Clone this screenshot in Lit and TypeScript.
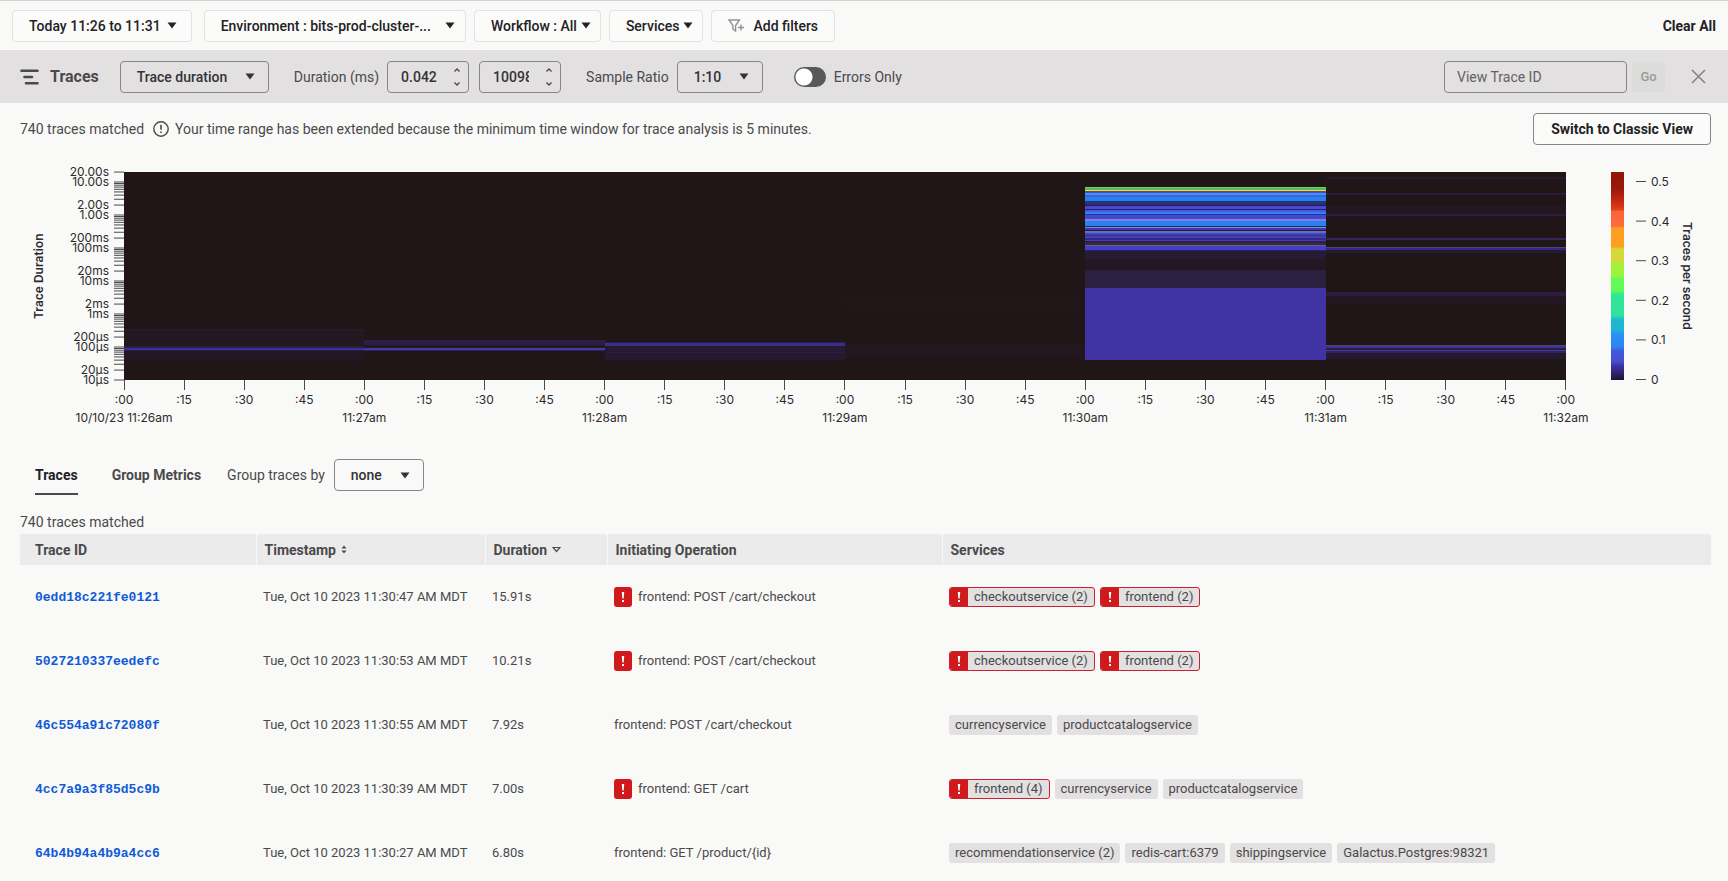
import { LitElement, html, css, svg } from "lit";
import { customElement } from "lit/decorators.js";

interface Chip { name: string; error?: boolean }
interface Trace { id: string; time: string; duration: string; op: string; error: boolean; services: Chip[] }

const TRACES: Trace[] = [
  { id: "0edd18c221fe0121", time: "11:30:47", duration: "15.91s", op: "frontend: POST /cart/checkout", error: true,
    services: [{ name: "checkoutservice (2)", error: true }, { name: "frontend (2)", error: true }] },
  { id: "5027210337eedefc", time: "11:30:53", duration: "10.21s", op: "frontend: POST /cart/checkout", error: true,
    services: [{ name: "checkoutservice (2)", error: true }, { name: "frontend (2)", error: true }] },
  { id: "46c554a91c72080f", time: "11:30:55", duration: "7.92s", op: "frontend: POST /cart/checkout", error: false,
    services: [{ name: "currencyservice" }, { name: "productcatalogservice" }] },
  { id: "4cc7a9a3f85d5c9b", time: "11:30:39", duration: "7.00s", op: "frontend: GET /cart", error: true,
    services: [{ name: "frontend (4)", error: true }, { name: "currencyservice" }, { name: "productcatalogservice" }] },
  { id: "64b4b94a4b9a4cc6", time: "11:30:27", duration: "6.80s", op: "frontend: GET /product/{id}", error: false,
    services: [{ name: "recommendationservice (2)" }, { name: "redis-cart:6379" }, { name: "shippingservice" }, { name: "Galactus.Postgres:98321" }] },
];

// Heat map bands: [minute, top, height, colour]
const BANDS: [number, number, number, string][] = [
  [0, 157, 2, "#251a30"], [0, 159, 15, "#231820"], [0, 174, 2, "#2a1e42"], [0, 176, 2, "#3d2f96"], [0, 178, 1, "#2a1e50"], [0, 180, 8, "#231726"],
  [1, 168, 5, "#2b1e44"], [1, 173, 3, "#241822"], [1, 176, 2, "#453aa8"], [1, 178, 1, "#2d2260"],
  [2, 170, 1, "#2b1e48"], [2, 171, 3, "#3c2d8c"], [2, 174, 6, "#251a32"], [2, 180, 1, "#2a1d48"], [2, 181, 7, "#251930"],
  [3, 125, 10, "#211719"], [3, 172, 14, "#22171f"],
  [4, 15, 1, "#78c87c"], [4, 16, 2, "#42c846"], [4, 18, 1, "#f0d09a"], [4, 19, 1, "#8a4328"], [4, 20, 1, "#3b4fd0"],
  [4, 21, 2, "#4a90f4"], [4, 23, 2, "#3464e0"], [4, 25, 4, "#2b80ec"], [4, 29, 2, "#173a88"], [4, 31, 2, "#3a2a66"], [4, 33, 1, "#211b58"],
  [4, 34, 3, "#4a48d4"], [4, 37, 1, "#1d2470"], [4, 38, 2, "#4858e0"], [4, 40, 2, "#2f84f2"], [4, 42, 1, "#1a3b90"],
  [4, 43, 4, "#4548cc"], [4, 47, 2, "#8878ec"], [4, 49, 5, "#2684ee"], [4, 54, 1, "#1c2c66"], [4, 55, 1, "#8a88c8"],
  [4, 56, 2, "#3c38b4"], [4, 58, 1, "#201a50"], [4, 59, 2, "#706fa8"], [4, 61, 2, "#3448cc"], [4, 63, 1, "#3f2d80"],
  [4, 64, 2, "#4340b8"], [4, 66, 2, "#32288c"], [4, 68, 1, "#453bb0"], [4, 69, 2, "#2c2050"], [4, 71, 2, "#3b2a34"],
  [4, 73, 1, "#6c6080"], [4, 74, 4, "#4240c8"], [4, 78, 1, "#2c2068"], [4, 79, 8, "#251b32"], [4, 87, 11, "#231724"], [4, 98, 18, "#2c2040"],
  [4, 116, 72, "#4034a4"],
  [5, 5, 2, "#261a2c"], [5, 21, 2, "#291d3a"], [5, 34, 8, "#231821"], [5, 42, 2, "#2b1d46"], [5, 66, 2, "#35265a"], [5, 75, 1, "#51466c"],
  [5, 76, 2, "#362684"], [5, 78, 3, "#261a30"], [5, 120, 4, "#2a1d40"], [5, 124, 8, "#231821"], [5, 173, 1, "#4d4678"], [5, 174, 2, "#3c3298"],
  [5, 176, 2, "#2a1e40"], [5, 178, 1, "#443a88"], [5, 179, 2, "#2e2268"], [5, 181, 6, "#251a2c"],
];

const DECADE = 33;
const PLOT_TOP = 8;
const Y_LABELS = ["10µs", "100µs", "1ms", "10ms", "100ms", "1.00s", "10.00s"];
const Y_LABELS_2 = ["20µs", "200µs", "2ms", "20ms", "200ms", "2.00s", "20.00s"];
const yAt = (decades: number) => PLOT_TOP + 208 - decades * DECADE;

const caret = html`<svg class="caret" viewBox="0 0 10 7" width="10" height="7" aria-hidden="true"><path d="M0.5 0.5h9L5 6.5z" fill="currentColor"/></svg>`;
const bang = html`<svg viewBox="0 0 4 12" width="4" height="12" aria-hidden="true"><path d="M0.8 1h2.4L2.700 7.500H1.300z" fill="#fff"/><rect x="1" y="9" width="2" height="2" fill="#fff"/></svg>`;

@customElement("app-root")
export class AppRoot extends LitElement {
  static styles = css`
    :host {
      display: block; height: 100vh; overflow: hidden; box-sizing: border-box;
      border-top: 1px solid #d3d3d3; background: #f9f9f8; color: #4a4a4c;
      font: 14px/20px Roboto, "Liberation Sans", sans-serif;
    }
    * { box-sizing: border-box; }
    button, input, select { font: inherit; color: inherit; margin: 0; }
    button, select { cursor: pointer; }
    svg { display: block; flex: none; }
    .filters { display: flex; align-items: center; gap: 8px; height: 49px; padding: 0 12px; color: #222225; font-weight: 500; }
    .filter { display: flex; align-items: center; gap: 6px; height: 32px; padding: 0 14px 0 16px; border: 1px solid #e1e1e6; border-radius: 4px; background: #fbfbfa; }
    .filter.time { margin-right: 4px; }
    .filter.env { gap: 14px; padding-right: 10px; }
    .filter.tight { padding-right: 9px; gap: 4px; }
    .filter.add { padding-right: 16px; gap: 8px; }
    .clear { margin-left: auto; padding: 0; border: 0; background: none; font-weight: 700; }
    .toolbar { display: flex; align-items: center; height: 53px; padding: 0 16px 0 20px; background: #e2e0e0; }
    .brand { display: flex; align-items: center; gap: 11px; margin: 0 21px 0 0; font-size: 16px; font-weight: 700; }
    .select { display: inline-grid; align-items: center; color: #333336; font-weight: 500; }
    .select select {
      grid-area: 1 / 1; appearance: none; height: 32px; padding: 0 40px 0 16px; border: 1px solid #85858c; border-radius: 4px; background: none;
    }
    .select .caret { grid-area: 1 / 1; justify-self: end; margin-right: 14px; pointer-events: none; }
    .field { display: flex; align-items: center; gap: 8px; margin-left: 25px; }
    .number { display: flex; align-items: center; width: 82px; height: 32px; padding: 0 7px 0 13px; border: 1px solid #85858c; border-radius: 4px; color: #333336; }
    .number + .number { margin-left: 2px; }
    .number input { flex: 1; min-width: 0; margin-right: 16px; padding: 0; border: 0; outline: 0; background: none; appearance: textfield; font-weight: 500; }
    .number input::-webkit-inner-spin-button { display: none; }
    .switch { display: flex; align-items: center; gap: 8px; margin-left: 31px; }
    .switch input { appearance: none; width: 32px; height: 20px; border-radius: 10px; background: radial-gradient(circle at 10px 10px, #fff 8px, #59595b 9px); }
    .lookup { display: flex; align-items: center; gap: 5px; margin-left: auto; }
    .lookup input { width: 183px; height: 32px; padding: 0 12px; border: 1px solid #85858c; border-radius: 4px; background: none; }
    .lookup input::placeholder { color: #626265; opacity: 1; }
    .lookup .go { height: 30px; width: 33px; padding: 0; border: 0; border-radius: 3px; background: #dcdcdb; color: #9a9a9c; font-size: 13px; font-weight: 500; }
    .lookup .close { margin-left: 15px; padding: 6px; border: 0; background: none; color: #808084; }
    .summary { display: flex; align-items: center; height: 52px; padding: 0 17px 0 20px; gap: 9px; }
    .summary .note { display: flex; align-items: center; gap: 6px; }
    .classic { margin-left: auto; height: 32px; padding: 0 17px; border: 1px solid #85858c; border-radius: 4px; background: #fbfbfa; color: #222225; font-weight: 700; }
    .chart { display: grid; grid-template-columns: 20px 73px minmax(0, 1fr) 162px; padding: 9px 0 0 31px; font: 12px/16px Inter, sans-serif; color: #2b2b2d; }
    .chart .axis-title { writing-mode: vertical-rl; text-align: center; font-weight: 600; font-size: 12px; }
    .chart .left { transform: rotate(180deg); height: 216px; padding-bottom: 8px; justify-self: start; }
    .chart text { font: 12px Inter, sans-serif; fill: #2b2b2d; }
    .plot { padding-top: 8px; }
    .plot .heat { width: 100%; height: 208px; background: #201618; }
    .times { display: flex; justify-content: space-between; height: 56px; }
    .time-tick { display: flex; flex-direction: column; align-items: center; width: 0; white-space: nowrap; }
    .time-tick::before { content: ""; flex: none; width: 1px; height: 10px; background: #4a4a4c; }
    .time-tick span { margin-top: 2px; line-height: 16px; }
    .legend { display: flex; padding: 8px 0 0 45px; }
    .ramp {
      width: 13px; height: 208px;
      background: linear-gradient(#8e160a 0, #9b180a 8%, #c62810 14%, #e04020 18%, #f96639 19%, #fb6c3c 26%, #fda022 27%, #fda022 36%,
        #d6d83a 37%, #d4da38 43%, #a4f03c 44%, #9cf43c 50%, #64fb54 51%, #60fa58 57%, #30e698 59%, #2ee29c 69%,
        #1eb8d2 71%, #1fb4d6 76%, #2a90f6 78%, #2c84f0 84%, #4258dc 86%, #4450d0 91%, #3c34a8 93%, #30206a 97%, #221428 100%);
    }
    .legend .axis-title { height: 208px; margin-left: 5px; }
    .tabs { display: flex; align-items: center; padding: 19px 35px 0; }
    .tabs .tab { height: 40px; padding: 1px 0 0; margin-right: 34px; border: 0; border-bottom: 2px solid transparent; background: none; font-weight: 700; }
    .tabs .tab.group { margin-right: 26px; }
    .tabs .tab.active { border-color: #4a4a4c; color: #222225; }
    .tabs .group-by { display: flex; align-items: center; gap: 9px; }
    .list { padding: 17px 17px 0 20px; }
    .list p { margin: 0 0 2px; }
    table { width: 100%; border-collapse: collapse; table-layout: fixed; }
    th { height: 31px; padding: 0 0 0 8px; text-align: left; font-weight: 700; background: #ebebeb; border-right: 1px solid #f9f9f8; }
    th:last-child { border-right: 0; }
    td { height: 64px; padding: 0 0 0 7px; white-space: nowrap; font-size: 13px; }
    th:first-child, td:first-child { padding-left: 15px; }
    .c-id { width: 236px; } .c-time { width: 229px; } .c-dur { width: 122px; } .c-op { width: 335px; }
    .sort { display: inline-flex; align-items: center; gap: 5px; padding: 0; border: 0; background: none; font-weight: 700; }
    .id { color: #0f5bd6; text-decoration: none; font: 700 13px/20px "Liberation Mono", monospace; }
    .op, .chips { display: flex; align-items: center; gap: 6px; }
    .chips { gap: 5px; }
    .flag { display: flex; align-items: center; justify-content: center; width: 18px; height: 20px; border-radius: 3px; background: #d0191b; }
    .chip { display: flex; align-items: center; height: 20px; padding: 0 6px; border-radius: 3px; background: #e2e0e0; }
    .chip.error { padding: 0 6px 0 0; gap: 6px; border: 1px solid #cc2030; overflow: hidden; }
    .chip.error .flag { border-radius: 0; }
  `;

  private select(options: string[], id: string, label?: string) {
    return html`<span class="select"><select id=${id} aria-label=${label ?? id}>${options.map((o) => html`<option>${o}</option>`)}</select>${caret}</span>`;
  }

  private number(value: string, label: string) {
    return html`<span class="number"><input type="number" step="any" .value=${value} aria-label=${label} />
      <svg width="8" height="20" viewBox="0 0 8 20" fill="none" stroke="#4a4a4c" stroke-width="1.3"><path d="M1.500 4.500 4 2l2.500 2.500M1.500 15.500 4 18l2.500-2.500"/></svg></span>`;
  }

  private yAxis() {
    const ticks: number[] = [];
    for (let d = 0; d < 6; d++) for (let m = 1; m < 10; m++) ticks.push(d + Math.log10(m));
    ticks.push(6, 6 + Math.log10(2));
    return html`<svg width="73" height="232" viewBox="0 0 73 232" role="img" aria-label="Trace duration scale">
      ${ticks.map((t) => svg`<line x1="63" x2="73" y1=${yAt(t)} y2=${yAt(t)} stroke="#4a4a4c" stroke-width="1"/>`)}
      ${Y_LABELS.map((l, i) => svg`<text x="58" y=${yAt(i) + 4} text-anchor="end">${l}</text>`)}
      ${Y_LABELS_2.map((l, i) => svg`<text x="58" y=${yAt(i + Math.log10(2)) + 4} text-anchor="end">${l}</text>`)}
    </svg>`;
  }

  private times() {
    return Array.from({ length: 25 }, (_, i) => {
      const minute = i / 4;
      return html`<div class="time-tick"><span>:${String((i % 4) * 15).padStart(2, "0")}</span>
        ${i % 4 === 0 ? html`<span>${i === 0 ? "10/10/23 " : ""}11:${26 + minute}am</span>` : ""}</div>`;
    });
  }

  render() {
    return html`
      <nav class="filters">
        <button class="filter time">Today 11:26 to 11:31 ${caret}</button>
        <button class="filter env">Environment : bits-prod-cluster-... ${caret}</button>
        <button class="filter tight">Workflow : All ${caret}</button>
        <button class="filter tight">Services ${caret}</button>
        <button class="filter add">
          <svg width="17" height="14" viewBox="0 0 17 14" fill="none" stroke="#929296" stroke-width="1.4"><path d="M1 1h10.500L7.600 6.500V12L4.900 10V6.500z"/><path d="M13 5.500v6M10 8.500h6"/></svg>
          Add filters
        </button>
        <button class="clear">Clear All</button>
      </nav>
      <header class="toolbar">
        <h1 class="brand">
          <svg width="19" height="16" viewBox="0 0 19 16" fill="none" stroke="#4a4a4c" stroke-width="2.600" stroke-linecap="round"><path d="M1.500 1.800h16M4.500 8H12M6 14.200h11.500"/></svg>
          Traces
        </h1>
        ${this.select(["Trace duration"], "metric", "Metric")}
        <div class="field"><span>Duration (ms)</span>${this.number("0.042", "Minimum duration")}${this.number("100981", "Maximum duration")}</div>
        <div class="field"><label for="ratio">Sample Ratio</label>${this.select(["1:10"], "ratio", "Sample Ratio")}</div>
        <label class="switch"><input type="checkbox" role="switch" />Errors Only</label>
        <form class="lookup">
          <input type="text" placeholder="View Trace ID" aria-label="View Trace ID" />
          <button class="go" type="button" disabled>Go</button>
          <button class="close" type="button" aria-label="Close"><svg width="15" height="15" viewBox="0 0 15 15" fill="none" stroke="currentColor" stroke-width="1.5"><path d="M1 1l13 13M14 1 1 14"/></svg></button>
        </form>
      </header>
      <main>
        <section class="summary">
          <span>740 traces matched</span>
          <span class="note">
            <svg width="16" height="16" viewBox="0 0 16 16"><circle cx="8" cy="8" r="7.200" fill="none" stroke="#4a4a4c" stroke-width="1.400"/><path d="M7.200 3.800h1.600v5H7.200zM7.200 10.400h1.600V12H7.200z" fill="#4a4a4c"/></svg>
            Your time range has been extended because the minimum time window for trace analysis is 5 minutes.
          </span>
          <button class="classic">Switch to Classic View</button>
        </section>
        <section class="chart">
          <div class="axis-title left">Trace Duration</div>
          ${this.yAxis()}
          <div class="plot">
            <svg class="heat" viewBox="0 0 6 208" preserveAspectRatio="none" shape-rendering="crispEdges">
              ${BANDS.map(([m, y, h, c]) => svg`<rect x=${m} y=${y} width="1" height=${h} fill=${c}/>`)}
            </svg>
            <div class="times">${this.times()}</div>
          </div>
          <div class="legend">
            <div class="ramp"></div>
            <svg width="50" height="216" viewBox="0 0 50 216">
              ${[0, 1, 2, 3, 4, 5].map((n) => svg`<line x1="12" x2="22" y1=${207.5 - n * 39.600} y2=${207.5 - n * 39.600} stroke="#4a4a4c"/><text x="27" y=${212 - n * 39.600}>${n ? `0.${n}` : "0"}</text>`)}
            </svg>
            <div class="axis-title">Traces per second</div>
          </div>
        </section>
        <section class="tabs">
          <button class="tab active">Traces</button>
          <button class="tab group">Group Metrics</button>
          <div class="group-by"><label for="group">Group traces by</label>${this.select(["none"], "group", "Group traces by")}</div>
        </section>
        <section class="list">
          <p>740 traces matched</p>
          <table>
            <colgroup><col class="c-id" /><col class="c-time" /><col class="c-dur" /><col class="c-op" /><col /></colgroup>
            <thead><tr>
              <th>Trace ID</th>
              <th><button class="sort">Timestamp <svg width="6" height="9" viewBox="0 0 6 9" fill="#4a4a4c"><path d="M0.500 3.500 3 0.500l2.500 3zM0.500 5.500 3 8.500l2.500-3z"/></svg></button></th>
              <th><button class="sort">Duration <svg width="9" height="7" viewBox="0 0 9 7" fill="none" stroke="#4a4a4c" stroke-width="1.200"><path d="M1 1.500h7L4.500 5.500z"/></svg></button></th>
              <th>Initiating Operation</th>
              <th>Services</th>
            </tr></thead>
            <tbody>
              ${TRACES.map((t) => html`<tr>
                <td><a class="id" href="#${t.id}">${t.id}</a></td>
                <td>Tue, Oct 10 2023 ${t.time} AM MDT</td>
                <td>${t.duration}</td>
                <td><div class="op">${t.error ? html`<span class="flag">${bang}</span>` : ""}<span>${t.op}</span></div></td>
                <td><div class="chips">${t.services.map((s) => html`<span class="chip ${s.error ? "error" : ""}">${s.error ? html`<span class="flag">${bang}</span>` : ""}<span>${s.name}</span></span>`)}</div></td>
              </tr>`)}
            </tbody>
          </table>
        </section>
      </main>`;
  }
}
